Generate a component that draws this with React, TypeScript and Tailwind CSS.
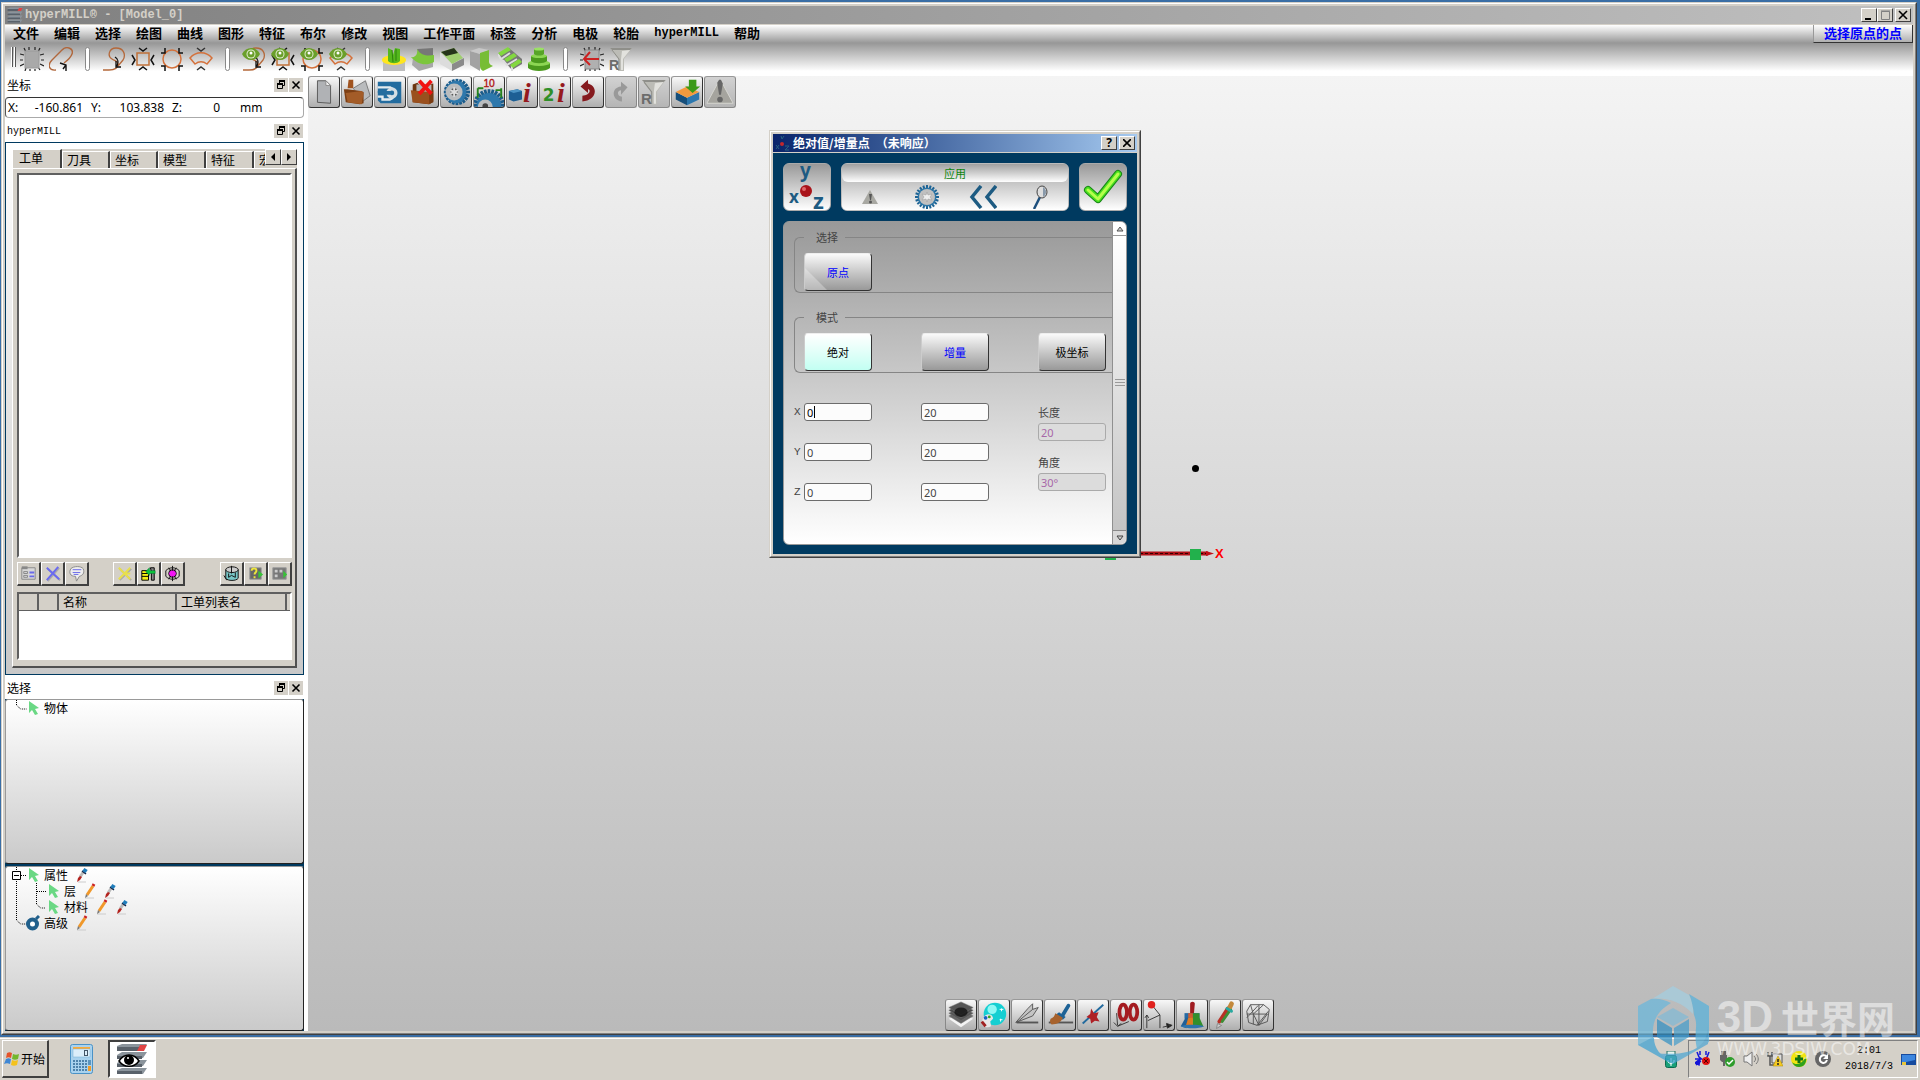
import React from 'react';
import { clsx } from 'clsx';

const raised = 'border border-t-white border-l-white border-r-[#404040] border-b-[#404040] bg-[#d4d0c8]';
const sunken = 'border-2 border-t-[#606060] border-l-[#606060] border-r-white border-b-white bg-white';

const menus = [
  '文件', '编辑', '选择', '绘图', '曲线', '图形', '特征', '布尔', '修改', '视图',
  '工作平面', '标签', '分析', '电极', '轮胎', 'hyperMILL', '帮助',
];

type Item = { label: string; art: React.ReactNode; dim?: boolean };

const gearTeeth = (cx: number, cy: number, r: number, count: number, width: number, color: string) => (
  <g fill={color}>
    {Array.from({ length: count }, (_, i) => (
      <rect
        key={i}
        x={cx - width / 2}
        y={cy - r}
        width={width}
        height={r}
        transform={`rotate(${(360 / count) * i} ${cx} ${cy})`}
      />
    ))}
  </g>
);

/* ---------- main toolbar, 24 x 24 ---------- */

const curve = (
  <g fill="none" strokeWidth="1.3">
    <path d="M1 23h6c5 0 9-2 9-6 0-3-3-3-6-5C5 9 7 1 14 1c8 0 10 7 7 12l-5 6" stroke="#b4683a" />
    <path d="M13 10c3 2 4 4 2 9M14 14v6h5" stroke="#111" />
  </g>
);
const squareSel = (
  <g fill="none">
    <rect x="6" y="6" width="12" height="12" stroke="#c07038" strokeWidth="1.5" />
    <path d="M8 1l4 3 4-3M8 23l4-3 4 3M1 8l3 5-3 5M23 8l-3 5 3 5" stroke="#111" strokeWidth="1.5" />
  </g>
);
const circleSel = (
  <g fill="none">
    <circle cx="12" cy="12" r="9" stroke="#d4713b" strokeWidth="1.5" />
    <path d="M1 6h4V1M23 6h-4V1M1 19h4v5M23 19h-4v5" stroke="#111" strokeWidth="1.5" />
  </g>
);
const fanSel = (
  <g fill="none">
    <path d="M1 11c6-7 16-7 22 0l-5 6c-4-3-8-3-12 0z" stroke="#d4713b" strokeWidth="1.5" />
    <path d="M8 1l4 3 4-3M8 23l4-3 4 3" stroke="#333" strokeWidth="1.5" />
  </g>
);
const eye = (
  <g>
    <path d="M0 7c4-8 14-8 18 0-4 8-14 8-18 0z" fill="#6a9f2a" />
    <circle cx="9" cy="7" r="4.500" fill="#e5efd5" />
    <circle cx="9" cy="7" r="3.500" fill="#6a9f2a" />
    <circle cx="9" cy="6" r="1.500" fill="#fff" />
  </g>
);
const rays = (
  <path
    d="M4 1l2 4M9 0v3M15 0v3M20 1l-2 4M0 7l4 1M0 13h3M0 19l4-2M24 7l-4 1M24 13h-3M24 19l-4-2M5 24l1-3M10 24v-2M15 24v-2M20 23l-2-3"
    stroke="#222"
    strokeWidth="1.2"
  />
);
const funnel = (
  <g>
    <path d="M1 1h22l-8 11v12H9V12z" fill="#bcbcb6" />
    <path d="M1 1h22l-2 2H3z" fill="#8f8f8a" />
    <path d="M13 4l8-1-7 9v11h-2V12z" fill="#e2e2de" />
    <path d="M3 3l7 9v11" fill="none" stroke="#8f8f8a" />
    <text x="0" y="23" fontSize="14" fontWeight="bold" fill="#6c6c6c" fontFamily="Liberation Sans, sans-serif">R</text>
  </g>
);

const toolGroups: Item[][] = [
  [
    { label: '框选', art: <g>{rays}<rect x="5" y="4" width="14" height="17" fill="#a9a9a9" stroke="#999" /></g> },
    {
      label: '套索',
      art: (
        <g fill="none" strokeWidth="1.4">
          <path d="M7 23C0 24-2 18 3 13L13 3c5-5 12-1 10 4-1 3-4 6-8 9" stroke="#b0673c" />
          <path d="M11 16l6 2v6M17 18l-3 4" stroke="#111" />
        </g>
      ),
    },
  ],
  [
    { label: '链', art: curve },
    { label: '面', art: squareSel },
    { label: '圆', art: circleSel },
    { label: '扇形', art: fanSel },
  ],
  [
    { label: '显示链', art: <g>{curve}{eye}</g> },
    { label: '显示面', art: <g>{squareSel}{eye}</g> },
    { label: '显示圆', art: <g>{circleSel}{eye}</g> },
    { label: '显示扇形', art: <g>{fanSel}{eye}</g> },
  ],
  [
    {
      label: '凸台',
      art: (
        <g>
          <path d="M1 14h22v10H1z" fill="#bdbdbd" />
          <ellipse cx="12" cy="13" rx="12" ry="5" fill="#ffe61e" />
          <path d="M6 1l4 2 1 5 2-7 5 1v12c-3 3-9 3-12 0z" fill="#55b81d" />
          <path d="M10 3l1 12M14 2v12" stroke="#2f8010" />
        </g>
      ),
    },
    {
      label: '曲面',
      art: (
        <g>
          <path d="M2 11l20 2v7l-14 4-7-6z" fill="#a8a8a8" />
          <path d="M6 2l16-1v8H9z" fill="#777" />
          <path d="M0 10c5 1 7-4 6-8 4 7 11 7 17 6v7c-8 4-16 3-23-5z" fill="#7cc63c" />
        </g>
      ),
    },
    {
      label: '斜面',
      art: (
        <g>
          <path d="M0 5l12 12v7L0 17z" fill="#dcdcdc" />
          <path d="M12 17l12-6v7l-12 6z" fill="#8a8a8a" />
          <path d="M1 5l13-4 9 10-11 6z" fill="#9fcf6f" />
          <path d="M1 5l13-4 4 5-12 3z" fill="#26351a" />
        </g>
      ),
    },
    {
      label: '直纹面',
      art: (
        <g>
          <path d="M1 4l10 3v17L1 18z" fill="#a2a2a2" />
          <path d="M1 4l9-3 10 2-9 4z" fill="#c8c8c8" />
          <path d="M11 6l9-3v12c0 2 2 3 4 4l-10 5c-2-1-3-3-3-5z" fill="#77bd35" />
        </g>
      ),
    },
    {
      label: '台阶',
      art: (
        <g>
          <path d="M0 7l14 16 10-6v-5L11 1z" fill="#777" />
          <path d="M0 7l3 5 9-6M5 13l4 5 10-6M14 19v5" fill="none" stroke="#ddd" strokeWidth="2" />
          <path d="M0 6l10-6 3 3-10 6zM6 12l10-6 3 3-10 6zM12 18l9-6 3 3-9 6z" fill="#83d840" />
        </g>
      ),
    },
    {
      label: '旋转体',
      art: (
        <g>
          <path d="M1 16v5c4 4 18 4 22 0v-5z" fill="#4b9a1e" />
          <ellipse cx="12" cy="16" rx="11" ry="3" fill="#8cd653" />
          <path d="M4 9v5c3 3 13 3 16 0V9z" fill="#4b9a1e" />
          <ellipse cx="12" cy="9" rx="8" ry="2" fill="#8cd653" />
          <path d="M7 2v5c2 2 8 2 10 0V2z" fill="#57a428" />
          <ellipse cx="12" cy="2" rx="5" ry="1.5" fill="#9be165" />
        </g>
      ),
    },
  ],
  [
    {
      label: '取消选择',
      art: (
        <g>
          {rays}
          <rect x="5" y="3" width="14" height="19" fill="#b0b0b0" stroke="#888" />
          <path d="M19 12H5M10 5l-6 7 6 6" fill="none" stroke="#c22" strokeWidth="2" />
        </g>
      ),
    },
    { label: '过滤', art: funnel },
  ],
];

/* ---------- viewport toolbars, 32 x 32 ---------- */

const topTools: Item[] = [
  { label: '新建', art: <g><path d="M9 4h9l5 5v19l-14-1z" fill="#b0b2b5" stroke="#555" /><path d="M18 4v5h5z" fill="#f4f4f4" stroke="#888" /></g> },
  {
    label: '打开',
    art: (
      <g>
        <path d="M7 3h5v9H6z" fill="#a0531f" />
        <path d="M12 12l13-8 5 16-8 6z" fill="#b9bbbd" stroke="#777" />
        <path d="M2 13h4l14 2 3 1v12l-4 1-15-2z" fill="#7d3f14" />
        <path d="M4 17l17-2 2 2-2 12-15-2z" fill="#a35c28" />
      </g>
    ),
  },
  {
    label: '保存',
    art: (
      <g>
        <path d="M3 5h25v23H6l-3-3z" fill="#236c9f" />
        <path d="M3 11h13a7 7 0 010 13H8v-3H3" fill="none" stroke="#e3ebf0" strokeWidth="2.500" />
        <circle cx="18" cy="17" r="6" fill="#d5dee4" />
        <circle cx="18" cy="17" r="2.500" fill="#236c9f" />
        <path d="M3 15h13v4H8v-2H3z" fill="#236c9f" />
      </g>
    ),
  },
  {
    label: '关闭',
    art: (
      <g>
        <path d="M5 8l5-2 3 3 14-2v20l-5 2-17-2z" fill="#6d3510" />
        <path d="M9 8h16v9H9z" fill="#b5b7b8" />
        <path d="M3 14l20 2v13L5 27z" fill="#9a501e" />
        <path d="M23 16l4-2v12l-4 3z" fill="#7a3c12" />
        <path d="M12 4l13 14M25 4L12 18" stroke="#f11212" strokeWidth="4" />
      </g>
    ),
  },
  {
    label: '选项',
    art: (
      <g>
        {gearTeeth(17, 16, 14, 20, 3, '#1c5c8b')}
        <ellipse cx="16" cy="16" rx="11" ry="12" fill="#2e78ac" />
        <circle cx="14" cy="16" r="9" fill="#b9bcbe" />
        <circle cx="14" cy="16" r="4" fill="#555" />
        <path d="M14 11v10M10 14l8 4M18 14l-8 4" stroke="#ddd" strokeWidth="2" />
      </g>
    ),
  },
  {
    label: '公差',
    art: (
      <g>
        {gearTeeth(16, 30, 17, 24, 3, '#1c5c8b')}
        <circle cx="16" cy="30" r="13" fill="#2e78ac" />
        <circle cx="12" cy="32" r="8" fill="#b9bcbe" />
        <circle cx="12" cy="31" r="3" fill="#444" />
        <path d="M4 12v10M29 12v10M4 12h6M29 14h-6" stroke="#26831d" strokeWidth="2" />
        <text x="10" y="11" fontSize="11" fill="#b01818" stroke="#b01818" strokeWidth=".4" fontFamily="Liberation Sans, sans-serif">10</text>
      </g>
    ),
  },
  {
    label: '信息',
    art: (
      <g>
        <path d="M2 15l9-2 5 2v9l-9 2-5-2z" fill="#1d5f94" />
        <path d="M2 15l9-2 5 2-9 2z" fill="#4b93c4" />
        <text x="17" y="27" fontSize="30" fontStyle="italic" fontWeight="bold" fill="#96181d" fontFamily="Liberation Serif, serif">i</text>
      </g>
    ),
  },
  {
    label: '双信息',
    art: (
      <g>
        <text x="3" y="26" fontSize="18" fontWeight="bold" fill="#2f8f28" fontFamily="DejaVu Sans, sans-serif">2</text>
        <text x="18" y="27" fontSize="30" fontStyle="italic" fontWeight="bold" fill="#96181d" fontFamily="Liberation Serif, serif">i</text>
      </g>
    ),
  },
  { label: '撤销', art: <path d="M16 3v4c11 3 10 18-6 19v-6c9-1 9-7 6-7v4L8 10z" fill="#851a1e" /> },
  { label: '重做', dim: true, art: <path d="M16 5v5C5 11 6 25 17 26v-5c-6-1-5-7-1-7v5l7-8z" fill="#999" /> },
  { label: '选择过滤', dim: true, art: <g transform="translate(2 2) scale(1.15)">{funnel}</g> },
  {
    label: '导入',
    art: (
      <g>
        <path d="M4 16l12 6v8L4 24z" fill="#174f7b" />
        <path d="M16 22l13-6v8l-13 6z" fill="#2c77ae" />
        <path d="M4 16l12-6 13 6-13 6z" fill="#f39a3e" />
        <path d="M18 3h8v7h4l-8 7-8-7h4z" fill="#3a9a18" />
      </g>
    ),
  },
  {
    label: '警告',
    dim: true,
    art: (
      <g>
        <path d="M15 4h2l13 24H2z" fill="#a5a49e" stroke="#d8d7d2" />
        <path d="M13 6l2-3h2l2 4-2 12h-2z" fill="#666" />
        <circle cx="16" cy="24" r="3" fill="#666" />
      </g>
    ),
  },
];

const bottomTools: Item[] = [
  {
    label: '图层',
    art: (
      <g>
        <path d="M3 20l13 9 13-9-13-5z" fill="#f4f4f4" />
        <g stroke="#777" strokeWidth=".5">
          <path d="M3 17l13-7 13 7-13 8z" fill="#666" />
          <path d="M3 14l13-7 13 7-13 8z" fill="#555" />
          <path d="M3 11l13-7 13 7-13 8z" fill="#4a4a4a" />
          <path d="M3 8l13-6 13 6-13 8z" fill="#555" />
        </g>
        <ellipse cx="16" cy="13" rx="7" ry="5" fill="#0a0a0a" opacity=".7" />
      </g>
    ),
  },
  {
    label: '着色',
    art: (
      <g>
        <circle cx="17" cy="15" r="12" fill="#16cfd2" />
        <circle cx="14" cy="10" r="5" fill="#8ff8f4" />
        <path d="M24 9v3M22 10h4M23 20v3M22 21h3" stroke="#fff" />
        <path d="M4 20c3-7 11-6 11 0l-3 3 1 5c-5 3-12 0-9-8z" fill="#e7e7e7" />
        <circle cx="7" cy="19" r="2" fill="#1763c4" />
        <circle cx="11" cy="18" r="1.5" fill="#31a51f" />
        <path d="M3 23l4 5" stroke="#a02020" strokeWidth="3" />
      </g>
    ),
  },
  {
    label: '草图',
    art: (
      <g fill="#c4c4c4" stroke="#555">
        <path d="M4 24L17 9l5-5v6l6-2-6 9z" />
        <path d="M5 24L22 10" fill="none" />
        <path d="M5 24h23" strokeWidth="2" />
      </g>
    ),
  },
  {
    label: '清扫',
    art: (
      <g>
        <path d="M4 24h26" stroke="#555" strokeWidth="2" />
        <path d="M19 16l6-10" stroke="#1d6296" strokeWidth="4" strokeLinecap="round" />
        <path d="M15 13l7 5-3 3-8-5z" fill="#1d6296" />
        <path d="M11 14l8 5c-2 5-6 7-12 7-2-2-2-4-1-6 2-1 4-2 5-6z" fill="#a7622d" />
      </g>
    ),
  },
  {
    label: '点',
    art: (
      <g>
        <path d="M5 25L27 5" stroke="#226a9e" strokeWidth="2" />
        <path d="M14 9l3 5 5-1-2 5 3 5-5-1-4 3-1-5-4-2 4-3z" fill="#ae2026" />
      </g>
    ),
  },
  {
    label: '坐标',
    art: (
      <g>
        <path d="M6 14l1 13M3 24l4 4 12-5M7 28l4-3" fill="none" stroke="#333" />
        <g fill="none" stroke="#a51b20" strokeWidth="4">
          <ellipse cx="13" cy="13" rx="4" ry="8" />
          <ellipse cx="24" cy="13" rx="4" ry="8" />
        </g>
      </g>
    ),
  },
  {
    label: '量测',
    art: (
      <g fill="none" stroke="#333">
        <path d="M3 30V16l-2 3M3 16l2 3M4 22l13-6v14M17 16L9 6" />
        <path d="M20 29l8-2M30 27l-6-2 1 5z" fill="#111" />
        <circle cx="8" cy="5" r="4" fill="#e0221e" stroke="none" />
      </g>
    ),
  },
  {
    label: '渲染',
    art: (
      <g>
        <path d="M14 4c0-3 5-3 5 0l-1 11h-4z" fill="#a01d22" />
        <path d="M8 14h16v6H8z" fill="#256ba5" />
        <path d="M12 14h5v6h-5z" fill="#d35b31" />
        <path d="M9 19l-5 9 6 2 4-11z" fill="#1f5f98" />
        <path d="M12 19l-3 10h8V19z" fill="#dd7c21" />
        <path d="M17 14v15l11-1-4-9v-5z" fill="#338f2c" />
        <path d="M4 28c5-2 18-2 25 0-6 3-19 3-25 0z" fill="#2e74ad" />
      </g>
    ),
  },
  {
    label: '画笔',
    art: (
      <g strokeLinecap="round">
        <path d="M10 23L19 9" stroke="#b93025" strokeWidth="4" />
        <path d="M13 23L22 10" stroke="#3c8d34" strokeWidth="3" />
        <path d="M21 8l2-4" stroke="#c4893c" strokeWidth="5" />
        <path d="M18 9l5 3" stroke="#28a8a0" strokeWidth="3" />
        <path d="M7 30l1-5 4 2z" fill="#ccc" stroke="#888" />
      </g>
    ),
  },
  {
    label: '网格',
    art: (
      <path
        d="M8 5h14l6 5-2 13-11 4-9-3-2-12zM8 5l3 10 11-10M4 15h22M11 15l6 12 9-12M11 15v11M17 5v22M4 19L16 6M15 27l12-15"
        fill="none"
        stroke="#555"
      />
    ),
  },
];

const ViewButton: React.FC<{ item: Item }> = ({ item }) => (
  <button
    type="button"
    aria-label={item.label}
    className={clsx(
      'h-8 w-8 rounded-[3px] border border-t-[#999] border-l-[#888]',
      item.dim
        ? 'border-r-[#888] border-b-[#888] bg-linear-to-b from-[#d2d2d2] to-[#b5b5b5]'
        : 'border-r-[#333] border-b-[#333] bg-linear-to-b from-[#f8f8f8] to-[#aeaeae]',
    )}
  >
    <svg viewBox="0 0 32 32" className="h-[30px] w-[30px]">{item.art}</svg>
  </button>
);

/* ---------- left docks ---------- */

const DockTitle: React.FC<{ title: string; latin?: boolean; className?: string }> = ({ title, latin, className }) => (
  <div className={clsx('flex items-center justify-between pr-px pl-0.5', className)}>
    <span className={latin ? "pt-0.5 font-['Liberation_Mono',monospace] text-[10px]" : 'text-xs'}>{title}</span>
    <span className="flex gap-px">
      <button type="button" aria-label="浮动" className="h-3.5 w-3.5 bg-[#d4d0c8]">
        <svg viewBox="0 0 14 14" className="h-3.5 w-3.5" fill="none" stroke="#000">
          <path d="M5.500 5V2.500h5v5H8" />
          <path d="M5 3h6" strokeWidth="2" />
          <path d="M3.500 6.500h5v4h-5z" />
          <path d="M3 6h6" strokeWidth="2" />
        </svg>
      </button>
      <button type="button" aria-label="关闭面板" className="h-3.5 w-3.5 bg-[#d4d0c8]">
        <svg viewBox="0 0 14 14" className="h-3.5 w-3.5" stroke="#000" strokeWidth="1.600">
          <path d="M3.500 3.500l7 7M10.500 3.500l-7 7" />
        </svg>
      </button>
    </span>
  </div>
);

const jobTools: Item[][] = [
  [
    { label: '列表', art: <g fill="none" stroke="#888"><path d="M4 5h14v12H4z" fill="#d8d8d8" /><path d="M4 5h6" strokeWidth="3" /><path d="M6 9h4v2H6zM6 13h4v2H6z" /><path d="M12 10h5M12 14h5" stroke="#6a6ae8" strokeWidth="2" /></g> },
    { label: '删除', art: <g fill="none" strokeWidth="2"><path d="M6 6l13 12M18 5L6 19" stroke="#aaa" /><path d="M5 5l13 12M17 4L5 18" stroke="#6a6af0" /></g> },
    { label: '注释', art: <g><path d="M5 6c3-3 11-3 13 0 2 5-1 7-4 8l-3 5-1-5c-6 0-7-4-5-8z" fill="#eee" stroke="#888" /><path d="M7 7h9M7 10h8M8 12h5" stroke="#6a6ae8" /></g> },
  ],
  [
    { label: '清除', art: <g fill="none" strokeWidth="2"><path d="M6 6l12 12M18 6L6 18" stroke="#aaa" /><path d="M5 5l12 12M17 5L5 17M12 11h5" stroke="#e8e04c" /></g> },
    { label: '刀具库', art: <g><path d="M4 8h7v10H4z" fill="#f5ef16" stroke="#000" /><path d="M4 11h7M4 14h7" stroke="#000" /><path d="M13 5h4v13h-3V9z" fill="#888" stroke="#000" /><path d="M8 9l4-4v3h6v3h-6v2z" fill="#0ac53a" stroke="#063" strokeWidth=".5" /></g> },
    { label: '模拟', art: <g fill="none" stroke="#111"><circle cx="11" cy="11" r="4" fill="#f414f4" /><path d="M4 8c4-4 10-4 14 0v6c-4 4-10 4-14 0zM11 3v16M7 5l8 12M15 5L7 17" /><circle cx="11" cy="11" r="3" fill="#f414f4" stroke="none" /></g> },
  ],
  [
    { label: '毛坯', art: <g fill="#78c6c6" stroke="#111"><path d="M5 7v9c2 3 11 3 13 0V7z" /><ellipse cx="11.500" cy="7" rx="6.500" ry="3" fill="#ccc" /><path d="M11 3v8M8 11v4l3-2 4 2v-5M3 13l3 5" fill="none" /></g> },
    { label: '查询', art: <g><path d="M5 5h12v12H5z" fill="#666" stroke="#999" /><path d="M7 8c0-3 5-3 5 0 0 2-2 2-2 4M10 14v2" fill="none" stroke="#ece43c" strokeWidth="2" /><path d="M14 8l5 4-5 4z" fill="#36c336" /></g> },
    { label: '运行', art: <g><path d="M4 5h14v12H4z" fill="#777" stroke="#999" /><path d="M6 7h3v3H6zM6 12h3v3H6zM11 7h3v3h-3z" fill="#ccc" /><path d="M15 8l4 4-4 4z" fill="#36c336" /></g> },
  ],
];

const JobPanel: React.FC = () => (
  <section className="flex min-h-0 flex-[519] flex-col border border-[#003a60] bg-linear-to-b from-white to-[#c8c8c8] px-1.5 pt-1.5 pb-1.5">
    <div className="flex h-[19px] items-end overflow-hidden bg-[#d4d0c8]">
      {['工单', '刀具', '坐标', '模型', '特征'].map((tab, i) => (
        <button
          key={tab}
          type="button"
          className={clsx(
            'shrink-0 border-t border-r-2 border-l border-t-white border-r-[#404040] border-l-white text-left text-xs',
            i === 0 ? 'h-[19px] w-[50px] pb-0.5 pl-1.5' : 'h-[17px] w-12 pl-1 leading-4',
          )}
        >
          {tab}
        </button>
      ))}
      <button type="button" className="h-[17px] min-w-0 flex-1 overflow-hidden border-t border-l border-white pl-1 text-left text-xs leading-4">
        宏
      </button>
      <button type="button" aria-label="上一页" className={clsx(raised, 'flex h-4 w-4 shrink-0 items-center justify-center self-start')}>
        <svg viewBox="0 0 8 8" className="h-2 w-2"><path d="M6 0v8L2 4z" /></svg>
      </button>
      <button type="button" aria-label="下一页" className={clsx(raised, 'flex h-4 w-4 shrink-0 items-center justify-center self-start')}>
        <svg viewBox="0 0 8 8" className="h-2 w-2"><path d="M2 0v8l4-4z" /></svg>
      </button>
    </div>
    <div className="flex min-h-0 flex-1 flex-col border-t border-r-2 border-b-2 border-l border-t-white border-r-[#505050] border-b-[#505050] border-l-white bg-[#d4d0c8] pt-1 pr-[3px] pb-1.5 pl-1">
      <div className={clsx(sunken, 'min-h-0 flex-1')} />
      <div className="mt-1 flex">
        {jobTools.map((group, i) => (
          <div key={group[0].label} className={clsx('flex', i === 1 && 'ml-6', i === 2 && 'ml-auto')}>
            {group.map((tool) => (
              <button key={tool.label} type="button" aria-label={tool.label} className={clsx(raised, 'h-6 w-6 border-r-2 border-b-2')}>
                <svg viewBox="0 0 22 22" className="h-[21px] w-[21px]">{tool.art}</svg>
              </button>
            ))}
          </div>
        ))}
      </div>
      <div className={clsx(sunken, 'mt-1.5 h-[68px]')}>
        <table className="w-full table-fixed border-collapse text-xs">
          <thead>
            <tr className="h-4 bg-[#d4d0c8] text-left">
              <th className="w-[19px] border-r-2 border-b border-[#606060]" />
              <th className="w-5 border-r-2 border-b border-[#606060]" />
              <th className="w-[118px] border-r-2 border-b border-[#606060] p-0 pl-1 leading-4 font-normal">名称</th>
              <th className="border-r-2 border-b border-[#606060] p-0 pl-1 leading-4 font-normal">工单列表名</th>
              <th className="w-1 border-b border-[#606060]" />
            </tr>
          </thead>
        </table>
      </div>
    </div>
  </section>
);

const Cursor: React.FC = () => (
  <svg viewBox="0 0 12 16" className="h-4 w-3 shrink-0"><path d="M1 1l10 7-4 1 3 5-3 1-3-5-3 3z" fill="#6ad884" /></svg>
);
const Pencil: React.FC = () => (
  <svg viewBox="0 0 12 16" className="h-4 w-3 shrink-0">
    <path d="M1 15h9" stroke="#ccc" />
    <path d="M3 12l6-9" stroke="#f0982a" strokeWidth="3" />
    <path d="M1 15l1-4 2 2z" fill="#777" />
    <path d="M9 3l1-2" stroke="#c22" strokeWidth="3" />
  </svg>
);
const Dropper: React.FC = () => (
  <svg viewBox="0 0 12 16" className="h-4 w-3 shrink-0">
    <path d="M2 15h8" stroke="#ccc" />
    <path d="M4 10l4-6" stroke="#bbb" strokeWidth="3" />
    <path d="M1 15l1-4 2-2 2 1-2 3z" fill="#b3231f" />
    <path d="M6 4l4 3" stroke="#124" strokeWidth="1.500" />
    <path d="M8 5l2-3" stroke="#1f7dbb" strokeWidth="4" />
  </svg>
);

const Branch: React.FC<{ d: string; wide?: boolean; box?: boolean }> = ({ d, wide, box }) => (
  <svg viewBox={wide ? '0 0 42 16' : '0 0 22 16'} className={clsx('h-4 shrink-0', wide ? 'w-[42px]' : 'w-[22px]')} fill="none" stroke="#000">
    <path d={d} strokeDasharray="1 1" />
    {box && <path d="M6.500 4.500h8v8h-8zM8 8.500h5" fill="#fff" />}
  </svg>
);

const treePane = 'min-h-0 flex-1 rounded-[3px] border border-t-[#999] border-l-[#999] border-r-[#222] border-b-[#222] bg-linear-to-b from-white to-[#cacaca] text-xs';

/* ---------- dialog ---------- */

const DialogButton: React.FC<{ text: string; tone?: string; active?: boolean; corner?: boolean }> = ({ text, tone, active, corner }) => (
  <button
    type="button"
    className={clsx(
      'relative block h-[38px] w-[68px] overflow-hidden rounded-sm border border-t-[#eee] border-l-[#ccc] border-r-[#333] border-b-[#333] bg-linear-to-b text-[11px]',
      active ? 'from-white to-[#c2fff2]' : 'from-[#fafafa] to-[#999]',
      tone ?? 'text-black',
    )}
  >
    {corner && (
      <svg viewBox="0 0 22 22" className="absolute bottom-0 left-0 h-[22px] w-[22px]"><path d="M0 0l22 22H0z" fill="#fff" opacity=".3" /></svg>
    )}
    {text}
  </button>
);

const fieldStyle = "h-[18px] w-[68px] rounded-[3px] border border-[#6c6c6c] bg-[#fcfcfc] px-0.5 font-['Noto_Sans',sans-serif] text-[11px] outline-none disabled:border-[#aaa] disabled:bg-[#dcdcdc] disabled:text-[#a868a8]";

const groupStyle = 'rounded-l-md border border-r-0 border-[#858585] pt-2 pb-px pl-[9px]';

const Grip: React.FC = () => (
  <svg viewBox="0 0 10 8" className="h-2 w-2.5" stroke="#999"><path d="M0 .5h10M0 3.500h10M0 6.500h10" /></svg>
);

const PointDialog: React.FC = () => (
  <div
    role="dialog"
    aria-label="绝对值/增量点"
    className="absolute top-[54px] left-[461px] w-[372px] border border-t-[#d4d0c8] border-l-[#d4d0c8] border-r-[#404040] border-b-[#404040]"
  >
    <div className="border border-t-white border-l-white border-r-[#808080] border-b-[#808080] bg-[#d4d0c8] p-0.5">
      <div className="flex h-[18px] items-center bg-linear-to-r from-[#0a246a] to-[#a6caf0] px-0.5 text-xs font-bold text-white">
        <svg viewBox="0 0 16 16" className="mr-0.5 h-4 w-4">
          <circle cx="7" cy="9" r="2" fill="#c1272d" />
          <path d="M6 1l1 3 2-3M1 10l3 4M4 10l-3 4M10 11h4l-4 4h4" fill="none" stroke="#286080" />
        </svg>
        <span className="flex flex-1 gap-1.5">
          <span>绝对值/增量点</span>
          <span>（未响应）</span>
        </span>
        <button type="button" className={clsx(raised, 'mr-0.5 flex h-3.5 w-4 items-center justify-center font-sans text-xs leading-none text-black')}>?</button>
        <button type="button" aria-label="关闭" className={clsx(raised, 'flex h-3.5 w-4 items-center justify-center')}>
          <svg viewBox="0 0 8 8" className="h-2 w-2" stroke="#000" strokeWidth="1.600"><path d="M0 0l8 8M8 0L0 8" /></svg>
        </button>
      </div>
      <div className="mt-px flex flex-col gap-2.5 bg-[#003a60] px-2.5 pt-2.5 pb-[9px]">
        <div className="flex gap-2.5">
          <button type="button" aria-label="XYZ" className="h-12 w-12 rounded-md border border-[#aaa] bg-linear-to-b from-[#999] to-white">
            <svg viewBox="0 0 46 46" className="h-[46px] w-[46px]" fontFamily="Noto Sans, sans-serif" fontWeight="bold" fill="#1d5b82">
              <text x="16" y="13" fontSize="19">y</text>
              <text x="5" y="39" fontSize="17">x</text>
              <text x="29" y="45" fontSize="22">z</text>
              <circle cx="22" cy="27" r="6" fill="#a91319" />
              <circle cx="20" cy="25" r="2" fill="#e0686a" />
            </svg>
          </button>
          <div className="flex flex-1 flex-col overflow-hidden rounded-md border border-[#bbb] bg-linear-to-b from-[#aaa] to-white">
            <div className="h-[18px] rounded-b-md bg-linear-to-b from-[#a0a0a0] to-white text-center text-[11px] leading-[18px] text-[#0d850d]">应用</div>
            <div className="grid flex-1 grid-cols-4 place-items-center bg-linear-to-b from-[#c4c4c4] to-white pt-0.5">
              <button type="button" aria-label="警告">
                <svg viewBox="0 0 16 16" className="block h-4 w-4"><path d="M8 1l8 14H0z" fill="#a8a8a2" /><path d="M7 5h3l-1 6H8z" fill="#555" /><circle cx="8.500" cy="13" r="1.500" fill="#555" /></svg>
              </button>
              <button type="button" aria-label="设置">
                <svg viewBox="0 0 24 24" className="block h-6 w-6">
                  {gearTeeth(12, 12, 12, 20, 2, '#1d6394')}
                  <circle cx="12" cy="12" r="9.500" fill="#2a74a6" />
                  <circle cx="12" cy="12" r="8" fill="#c0c0c0" />
                  <path d="M12 7l1 3 4-1-2 3 2 3-4-1-1 3-1-3-4 1 2-3-2-3 4 1z" fill="#eee" stroke="#999" strokeWidth=".5" />
                </svg>
              </button>
              <button type="button" aria-label="返回">
                <svg viewBox="0 0 28 24" className="block h-6 w-7" fill="none" stroke="#1d5b82" strokeWidth="3.500"><path d="M12 1L3 12l9 11M27 1l-9 11 9 11" /></svg>
              </button>
              <button type="button" aria-label="查看">
                <svg viewBox="0 0 18 24" className="block h-6 w-[18px]"><path d="M9 12L3 24" stroke="#1d4f7d" strokeWidth="2.500" /><ellipse cx="11" cy="7" rx="5" ry="6" fill="#ddd" stroke="#444" /><path d="M12 2c4 2 4 8 0 10z" fill="#89a" /></svg>
              </button>
            </div>
          </div>
          <button type="button" aria-label="确定" className="h-12 w-12 rounded-md border border-[#aaa] bg-linear-to-b from-[#999] to-white">
            <svg viewBox="0 0 46 46" className="h-[46px] w-[46px]" fill="none" strokeLinecap="round" strokeLinejoin="round">
              <path d="M8 26l10 9L38 10" stroke="#178617" strokeWidth="8" />
              <path d="M8 26l10 9L38 10" stroke="#49df20" strokeWidth="6" />
              <path d="M8 26l10 9L38 10" stroke="#b6ff4c" strokeWidth="3" />
            </svg>
          </button>
        </div>

        <div className="flex overflow-hidden rounded-md border border-[#999] bg-linear-to-b from-[#999] to-white">
          <form className="flex-1 pt-[7px] pb-[43px] pl-2.5 text-[11px] text-[#444]">
            <fieldset className={groupStyle}>
              <legend className="h-4 pr-[7px] pl-3 leading-4">选择</legend>
              <DialogButton text="原点" tone="text-[#0000ff]" corner />
            </fieldset>
            <fieldset className={clsx(groupStyle, 'mt-4')}>
              <legend className="h-4 pr-[7px] pl-3 leading-4">模式</legend>
              <div className="flex gap-[49px]">
                <DialogButton text="绝对" active />
                <DialogButton text="增量" tone="text-[#0000ff]" />
                <DialogButton text="极坐标" />
              </div>
            </fieldset>
            <div className="mt-[30px] flex gap-[49px]">
              <div className="flex flex-col gap-[22px]">
                {['X', 'Y', 'Z'].map((axis) => (
                  <div key={axis} className="relative flex h-[18px] items-center">
                    <label htmlFor={`abs-${axis}`} className="w-2.5 font-['Liberation_Mono',monospace] text-[11px]">{axis}</label>
                    <input id={`abs-${axis}`} defaultValue="0" className={clsx(fieldStyle, axis === 'X' && 'text-black')} />
                    {axis === 'X' && <span className="absolute top-[3px] left-5 h-3 w-px bg-black" />}
                  </div>
                ))}
              </div>
              <div className="flex flex-col gap-[22px]">
                {['X', 'Y', 'Z'].map((axis) => (
                  <input key={axis} aria-label={`增量 ${axis}`} defaultValue="20" className={fieldStyle} />
                ))}
              </div>
              <div className="flex flex-col">
                <label htmlFor="length" className="h-5 leading-[18px]">长度</label>
                <input id="length" defaultValue="20" disabled className={fieldStyle} />
                <label htmlFor="angle" className="mt-3 h-5 leading-[18px]">角度</label>
                <input id="angle" defaultValue="30°" disabled className={fieldStyle} />
              </div>
            </div>
          </form>
          <div className="flex w-3.5 flex-col border-l border-[#909090] bg-white">
            <button type="button" aria-label="向上" className="flex h-3.5 items-center justify-center border-b border-[#999]">
              <svg viewBox="0 0 8 6" className="h-1.5 w-2" fill="#ccc" stroke="#555"><path d="M1 5l3-4 3 4z" /></svg>
            </button>
            <div className="flex flex-1 items-center justify-center bg-linear-to-b from-white to-[#c4c4c4]"><Grip /></div>
            <button type="button" aria-label="向下" className="flex h-3.5 items-center justify-center border-t border-[#888] bg-[#d8d8d8]">
              <svg viewBox="0 0 8 6" className="h-1.5 w-2" fill="#ccc" stroke="#444"><path d="M1 1l3 4 3-4z" /></svg>
            </button>
          </div>
        </div>
      </div>
    </div>
  </div>
);

/* ---------- taskbar ---------- */

const LayersLogo: React.FC<{ className: string; withEye?: boolean }> = ({ className, withEye }) => (
  <svg viewBox="0 0 32 30" className={className}>
    <path d="M1 2l5-2h25l-4 6H1zM1 11l5-3h25l-4 6H1zM1 19l5-3h25l-4 6H1zM1 26l5-2h25l-4 6H1z" fill="#8b949c" />
    <path d="M1 3h23v4H1zM1 12h25v3H1zM1 20h25v3H1zM1 27h25v3H1z" fill="#59616a" />
    <path d="M24 1h7l-3 6h-7z" fill="#e04444" />
    {withEye && (
      <g>
        <path d="M3 17c5-8 15-8 20 0-5 7-15 7-20 0z" fill="#fff" stroke="#000" strokeWidth="1.500" />
        <circle cx="13" cy="16" r="5" fill="#000" />
        <circle cx="12" cy="14" r="1" fill="#fff" />
      </g>
    )}
  </svg>
);

const tray: Item[] = [
  { label: '网络', art: <g stroke="#1414d8" strokeWidth="1.500" fill="none"><path d="M2 1l2 5 4 3M14 1l-2 5-3 3M0 8h6M1 14l5-4M5 0v4M11 0v4" /><path d="M5 8l-5 4 4 2z" fill="#1414d8" /><circle cx="11" cy="10" r="4" fill="#e01010" stroke="none" /><path d="M9 8l4 4M13 8l-4 4" stroke="#500" strokeWidth="1" /></g> },
  { label: '安全删除硬件', art: <g><path d="M2 0h5v4H2zM1 4h7v5l-2 2H3L1 9zM4 11h2v4H4z" fill="#666" /><circle cx="11" cy="11" r="5" fill="#2f9d2c" /><path d="M8 11l2 2 4-4" stroke="#fff" strokeWidth="1.500" fill="none" /></g> },
  { label: '音量', art: <g><path d="M1 5h3l5-4v14l-5-4H1z" fill="#eee" stroke="#777" /><path d="M11 5c2 2 2 4 0 6M13 3c3 3 3 7 0 10" fill="none" stroke="#777" /></g> },
  { label: '网络连接', art: <g><path d="M5 3h10v9H5z" fill="#ddd" stroke="#555" /><path d="M1 1v4h4V1M3 5v9h4" fill="none" stroke="#555" strokeWidth="1.500" /><path d="M11 5l5 10H6z" fill="#f6cb21" stroke="#a80" strokeWidth=".5" /><path d="M11 8v3M11 12v2" stroke="#222" strokeWidth="1.500" /></g> },
  { label: '防护', art: <g><circle cx="8" cy="8" r="8" fill="#f0e410" /><path d="M1 11c4 4 10 2 14-5 1 6-2 10-7 10-3 0-6-2-7-5z" fill="#2fa11d" /><path d="M8 4v8M4 8h8" stroke="#107010" strokeWidth="3" /></g> },
  { label: '同步', art: <g><circle cx="8" cy="8" r="8" fill="#666" /><path d="M12 9c-2 5-8 3-7-2 1-3 5-4 7-1" fill="none" stroke="#fff" strokeWidth="2" /><path d="M13 3v5H8z" fill="#fff" /></g> },
];

const Taskbar: React.FC = () => (
  <footer className="flex h-[43px] shrink-0 items-center border-t border-[#d4d0c8] bg-[#d4d0c8] pr-0.5 pl-0.5 text-xs shadow-[inset_0_1px_0_#fff]">
    <button type="button" className={clsx(raised, 'flex h-[38px] w-[47px] items-center gap-px border-r-2 border-b-2 pl-px')}>
      <svg viewBox="0 0 16 14" className="h-3.5 w-4 shrink-0">
        <path d="M3 1c2-1 3-1 5 0L7 6C5 5 4 5 2 6z" fill="#e5532a" />
        <path d="M9 2c2 1 4 1 6 0l-1 5c-2 1-4 1-6 0z" fill="#74b72b" />
        <path d="M2 7c2-1 3-1 5 0l-1 5c-2-1-4-1-6 0z" fill="#3f87d4" />
        <path d="M8 8c2 1 4 1 6 0l-1 5c-2 1-4 1-6 0z" fill="#f4c21c" />
      </svg>
      <span className="shrink-0">开始</span>
    </button>
    <button type="button" aria-label="计算器" className="ml-[21px]">
      <svg viewBox="0 0 23 30" className="h-[30px] w-[23px]">
        <rect x=".5" y=".5" width="22" height="29" rx="2" fill="#a9d2ee" stroke="#4a92c6" />
        <path d="M3 3h17v2H3z" fill="#f6ab3c" />
        <path d="M3 5h17v8H3z" fill="#dceefa" stroke="#76acd0" strokeWidth=".5" />
        <rect x="14.500" y="6.500" width="3" height="5" fill="none" stroke="#456" />
        <path d="M3 17h14M3 20h14M3 23h14M3 26h14" stroke="#4f83ab" strokeWidth="2" strokeDasharray="2 1" />
        <path d="M18 16h3v5h-3z" fill="#5b94bd" />
        <path d="M18 22h3v5h-3z" fill="#f29b27" />
      </svg>
    </button>
    <button type="button" aria-label="hyperMILL" className="ml-[15px] flex h-[38px] w-12 items-center justify-center border-2 border-t-[#404040] border-l-[#404040] border-r-white border-b-white bg-white">
      <LayersLogo className="h-[30px] w-8" withEye />
    </button>
    <div className="ml-auto flex items-center">
      <svg viewBox="0 0 12 17" className="mr-[11px] h-[17px] w-3">
        <path d="M2 0h8v5H2z" fill="#e8f4ee" stroke="#236e60" />
        <rect x=".5" y="4.500" width="11" height="12" rx="2" fill="#19a078" stroke="#0d6a50" />
        <path d="M6 7v8M3 9v2l3 2 3-2V9" fill="none" stroke="#fff" />
      </svg>
      <div className="flex h-[38px] items-center border border-t-[#808080] border-l-[#808080] border-r-white border-b-white pr-px pl-1.5">
        <div className="flex gap-2">
          {tray.map((item) => (
            <svg key={item.label} viewBox="0 0 16 16" className="h-4 w-4">{item.art}</svg>
          ))}
        </div>
        <div className="ml-3.5 text-center font-['Liberation_Mono',monospace] text-[10px] leading-4">
          <div>2:01</div>
          <div>2018/7/3</div>
        </div>
        <svg viewBox="0 0 15 13" className="ml-2 h-[13px] w-[15px]">
          <path d="M0 1h15v11H0z" fill="#164a9e" />
          <path d="M1 2h13v5L1 10z" fill="#3c86df" />
          <path d="M1 9h4v3H1z" fill="#e8c63c" />
        </svg>
      </div>
    </div>
  </footer>
);

const Watermark: React.FC = () => (
  <div className="pointer-events-none absolute right-[25px] bottom-[15px] flex items-center gap-2 text-white/50">
    <svg viewBox="0 0 72 80" className="h-20 w-[72px]" opacity=".7">
      <path d="M36 1l16 9c3 6 5 12 4 19C44 16 28 12 15 14z" fill="#a3cfe2" />
      <path d="M52 9l20 12v36L60 64c-4-18 2-22-3-34-1-8-2-14-5-21z" fill="#55b2dc" />
      <path d="M71 40c0 22-16 32-53 28l18 11 35-20z" fill="#4aa5d3" />
      <path d="M17 53c0 10 6 18 18 23l-2 2L1 60V42z" fill="#3aa0d2" />
      <path d="M1 21l13-7c8-1 14 1 20 4C19 27 15 37 16 52L1 60z" fill="#67b7dd" />
      <path d="M20 32l16-9 16 9-16 9z" fill="#80bad7" />
      <path d="M20 34l15 9v18l-15-9z" fill="#2f8fc3" />
      <path d="M52 34l-15 9v18l15-9z" fill="#439dcc" />
    </svg>
    <div className="leading-none">
      <div className="flex items-center gap-2 font-bold">
        <span className="font-['Liberation_Sans',sans-serif] text-[44px] leading-[48px]">3D</span>
        <span className="text-[38px] leading-[48px]">世界网</span>
      </div>
      <div className="font-['DejaVu_Sans',sans-serif] text-[17px] leading-4">WWW.3DSJW.COM</div>
    </div>
  </div>
);

const App: React.FC = () => (
  <div className="relative flex h-screen w-full flex-col overflow-hidden bg-[#3a6ea5] font-['Noto_Sans_CJK_SC',sans-serif] text-black">
    <div className="mt-0.5 mr-[3px] mb-0.5 ml-px flex min-h-0 flex-1 flex-col border border-t-[#d4d0c8] border-l-[#d4d0c8] border-r-[#404040] border-b-[#404040]">
      <div className="flex min-h-0 flex-1 flex-col border border-t-white border-l-white border-r-[#808080] border-b-[#808080] bg-[#d4d0c8] p-0.5">
        <header className="flex h-[18px] shrink-0 items-center bg-linear-to-r from-[#808080] to-[#c0c0c0] pr-0.5 pl-0.5">
          <LayersLogo className="h-4 w-4" />
          <h1 className="ml-0.5 flex-1 font-['Liberation_Mono',monospace] text-xs font-bold text-[#d4d0c8]">hyperMILL® - [Model_0]</h1>
          <button type="button" aria-label="最小化" className={clsx(raised, 'h-3.5 w-4')}>
            <svg viewBox="0 0 14 12" className="h-3 w-3.5"><path d="M3 9h6v2H3z" /></svg>
          </button>
          <button type="button" aria-label="最大化" className={clsx(raised, 'mr-0.5 h-3.5 w-4')}>
            <svg viewBox="0 0 14 12" className="h-3 w-3.5" fill="none" stroke="#808080"><path d="M3.500 2.500h8v8h-8zM3 2h9" /></svg>
          </button>
          <button type="button" aria-label="关闭窗口" className={clsx(raised, 'h-3.5 w-4')}>
            <svg viewBox="0 0 14 12" className="h-3 w-3.5" stroke="#000" strokeWidth="1.600"><path d="M3 2l8 8M11 2l-8 8" /></svg>
          </button>
        </header>

        <div className="mt-px h-[51px] shrink-0 bg-[linear-gradient(#fff_0,#979797_18px,#fff_46px)]">
          <nav className="flex h-[18px] items-start justify-between">
            <div className="flex items-center gap-[15px] pl-2 text-[13px] leading-4 font-bold">
              {menus.map((menu) => (
                <a
                  key={menu}
                  href="#"
                  className={clsx(menu === 'hyperMILL' && "font-['Liberation_Mono',monospace] text-xs leading-4")}
                >
                  {menu}
                </a>
              ))}
            </div>
            <button type="button" className="h-[18px] w-[100px] border-r border-b border-l border-l-[#999] border-r-[#333] border-b-[#333] bg-linear-to-b from-white to-[#b0b0b0] pb-0.5 text-[13px] leading-[14px] font-bold text-[#0000ff]">
              选择原点的点
            </button>
          </nav>
          <div className="flex items-start gap-[5px] pt-1 pl-1.5">
            <span className="-mr-px flex gap-px">
              <i className="h-5 w-0.5 border-r border-[#555] bg-white" />
              <i className="h-5 w-0.5 border-r border-[#555] bg-white" />
            </span>
            {toolGroups.map((group, i) => (
              <React.Fragment key={group[0].label}>
                {i > 0 && <span className="mx-[7px] h-6 w-[5px] rounded-sm border border-[#888] bg-white" />}
                {group.map((tool) => (
                  <button key={tool.label} type="button" aria-label={tool.label} className="h-6 w-6">
                    <svg viewBox="0 0 24 24" className="h-6 w-6">{tool.art}</svg>
                  </button>
                ))}
              </React.Fragment>
            ))}
          </div>
        </div>

        <div className="flex min-h-0 flex-1">
          <aside className="flex w-[303px] shrink-0 flex-col bg-white pr-1">
            <DockTitle title="坐标" className="h-[18px]" />
            <div className="mt-[3px] flex h-[21px] shrink-0 items-center rounded-sm border border-t-[#333] border-l-[#555] border-r-[#aaa] border-b-[#aaa] pl-0.5 font-['Liberation_Sans_Narrow','Noto_Sans',sans-serif] text-xs">
              <span className="w-3">X:</span>
              <span className="w-[63px] text-right">-160.861</span>
              <span className="ml-2 w-3">Y:</span>
              <span className="w-[61px] text-right">103.838</span>
              <span className="ml-2 w-3">Z:</span>
              <span className="w-9 text-right">0</span>
              <span className="ml-5">mm</span>
            </div>
            <DockTitle title="hyperMILL" latin className="h-6 shrink-0 pt-px" />
            <JobPanel />
            <DockTitle title="选择" className="h-6 shrink-0 pt-0.5" />
            <div className="flex min-h-0 flex-[332] flex-col gap-0.5 bg-[#003a60]">
              <div className={treePane}>
                <div className="flex h-4 items-center">
                  <Branch d="M10.500 0v5l4 4h6" />
                  <Cursor />
                  <span className="ml-1">物体</span>
                </div>
              </div>
              <div className={treePane}>
                <div className="flex h-4 items-center">
                  <Branch d="M10.500 0v16M15 8.500h6" box />
                  <Cursor />
                  <span className="mr-2 ml-1">属性</span>
                  <Dropper />
                </div>
                <div className="flex h-4 items-center">
                  <Branch d="M10.500 0v16M30.500 0v16M31 8.500h9" wide />
                  <Cursor />
                  <span className="mr-2 ml-1">层</span>
                  <Pencil />
                  <span className="ml-2 flex"><Dropper /></span>
                </div>
                <div className="flex h-4 items-center">
                  <Branch d="M10.500 0v16M30.500 0v5l4 4h5" wide />
                  <Cursor />
                  <span className="mr-2 ml-1">材料</span>
                  <Pencil />
                  <span className="ml-2 flex"><Dropper /></span>
                </div>
                <div className="flex h-4 items-center">
                  <Branch d="M10.500 0v5l4 4h6" />
                  <svg viewBox="0 0 14 16" className="-ml-0.5 h-4 w-3.5 shrink-0">
                    <circle cx="6.500" cy="9" r="4.500" fill="#fff" stroke="#205f8b" strokeWidth="4" />
                    <path d="M10 4l3-3" stroke="#205f8b" strokeWidth="3" />
                  </svg>
                  <span className="mr-2 ml-1">高级</span>
                  <Pencil />
                </div>
              </div>
            </div>
          </aside>

          <main className="relative flex min-w-0 flex-1 flex-col justify-between bg-linear-to-b from-[#f4f4f4] to-[#bababa]">
            <div className="flex gap-px">
              {topTools.map((item) => <ViewButton key={item.label} item={item} />)}
            </div>
            <svg viewBox="0 0 140 110" className="absolute top-[384px] left-[792px] h-[110px] w-[140px]">
              <circle cx="95.500" cy="8.500" r="3.500" />
              <path d="M20 93.500h88" stroke="#b01018" strokeWidth="4" />
              <path d="M20 93.500h88" stroke="#300" strokeDasharray="3 2" />
              <path d="M106 91l8 2.500-8 2.500z" fill="#c01018" />
              <path d="M5 89h11v11H5zM90 89h11v11H90z" fill="#22b14c" />
              <text x="115" y="98" fontSize="13" fontWeight="bold" fill="#f00" fontFamily="Liberation Sans, sans-serif">X</text>
            </svg>
            <PointDialog />
            <div className="flex justify-center gap-px pr-0.5">
              {bottomTools.map((item) => <ViewButton key={item.label} item={item} />)}
            </div>
          </main>
        </div>
      </div>
    </div>
    <Taskbar />
    <Watermark />
  </div>
);

export default App;
